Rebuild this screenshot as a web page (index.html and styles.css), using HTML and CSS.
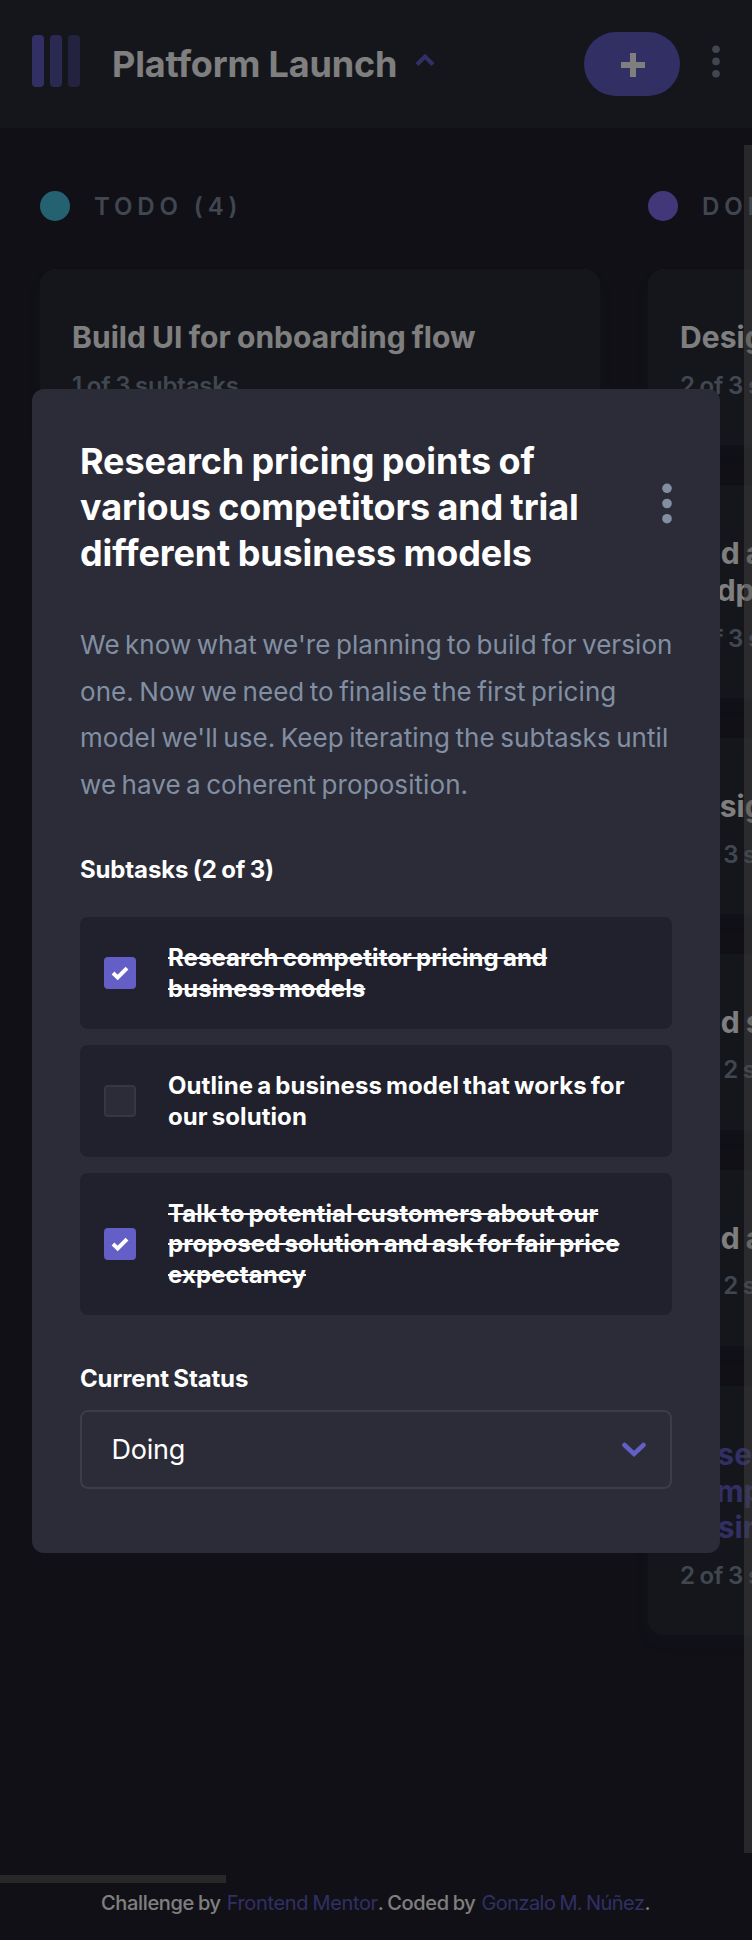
FILE: index.html
```html
<!DOCTYPE html>
<html lang="en">
<head>
<meta charset="utf-8">
<title>Kanban</title>
<link rel="stylesheet" href="styles.css">
</head>
<body>
<div class="app">
  <header class="header">
    <svg class="logo" width="48" height="52" viewBox="0 0 48 52"><rect width="12" height="52" rx="4" fill="#635fc7"/><rect x="18" width="12" height="52" rx="4" fill="#635fc7" opacity=".75"/><rect x="36" width="12" height="52" rx="4" fill="#635fc7" opacity=".5"/></svg>
    <h1 class="board-name">Platform Launch</h1>
    <svg class="board-arrow" width="20" height="14" viewBox="0 0 20 14"><path d="M2 11.5 10 3.5 18 11.5" fill="none" stroke="#635fc7" stroke-width="4"/></svg>
    <button class="add" aria-label="Add task"><svg width="26" height="26" viewBox="0 0 26 26"><path d="M10 1h6v9h9v6h-9v9h-6v-9H1v-6h9z" fill="#fff"/></svg></button>
    <svg class="menu" width="8" height="33" viewBox="0 0 8 33"><g fill="#828fa3"><circle cx="4" cy="4.2" r="3.8"/><circle cx="4" cy="16.4" r="3.8"/><circle cx="4" cy="28.7" r="3.8"/></g></svg>
  </header>
  <main class="board">
    <section class="column">
      <h2 class="column-name"><span class="dot dot-todo"></span>TODO (4)</h2>
      <article class="card"><h3>Build UI for onboarding flow</h3><p>1 of 3 subtasks</p></article>
    </section>
    <section class="column">
      <h2 class="column-name"><span class="dot dot-doing"></span>DOING (6)</h2>
      <article class="card"><h3>Design settings and search pages</h3><p>2 of 3 subtasks</p></article>
      <article class="card"><h3>Add account management<br>endpoints</h3><p>2 of 3 subtasks</p></article>
      <article class="card"><h3>Design onboarding flow</h3><p>1 of 3 subtasks</p></article>
      <article class="card"><h3>Add search endpoints</h3><p>1 of 2 subtasks</p></article>
      <article class="card"><h3>Add authentication endpoints</h3><p>1 of 2 subtasks</p></article>
      <article class="card active"><h3>Research pricing points of various<br>competitors and trial different<br>business models</h3><p>2 of 3 subtasks</p></article>
    </section>
    <span class="scroll-y"></span>
    <span class="scroll-x"></span>
  </main>
  <footer class="footer">Challenge by <a class="link-mentor">Frontend Mentor</a>. Coded by <a class="link-author">Gonzalo M. Núñez</a>.</footer>
</div>
<div class="overlay">
  <div class="modal" role="dialog">
    <div class="modal-head">
      <h2>Research pricing points of<br>various competitors and trial<br>different business models</h2>
      <svg width="10" height="41" viewBox="0 0 10 41"><g fill="#828fa3"><circle cx="5" cy="5.3" r="4.8"/><circle cx="5" cy="20.5" r="4.8"/><circle cx="5" cy="35.7" r="4.8"/></g></svg>
    </div>
    <p class="description">We know what we're planning to build for version<br>one. Now we need to finalise the first pricing<br>model we'll use. Keep iterating the subtasks until<br>we have a coherent proposition.</p>
    <h3 class="label">Subtasks (2 of 3)</h3>
    <ul class="subtasks">
      <li class="done"><span class="check"><svg width="20" height="16" viewBox="0 0 20 16"><path d="M3 8 7.7 12.4 17 3.2" fill="none" stroke="#fff" stroke-width="4"/></svg></span><span class="task">Research competitor pricing and<br>business models</span></li>
      <li><span class="check"></span><span class="task">Outline a business model that works for<br>our solution</span></li>
      <li class="done"><span class="check"><svg width="20" height="16" viewBox="0 0 20 16"><path d="M3 8 7.7 12.4 17 3.2" fill="none" stroke="#fff" stroke-width="4"/></svg></span><span class="task">Talk to potential customers about our<br>proposed solution and ask for fair price<br>expectancy</span></li>
    </ul>
    <h3 class="label status">Current Status</h3>
    <div class="select"><span>Doing</span><svg width="24" height="16" viewBox="0 0 24 16"><path d="M2.5 3 12 12 21.5 3" fill="none" stroke="#635fc7" stroke-width="4.5" stroke-linecap="round"/></svg></div>
  </div>
</div>
</body>
</html>
```
FILE: styles.css
```css
* { box-sizing: border-box; margin: 0; padding: 0; }
body { width: 752px; height: 1940px; overflow: hidden; background: #20212c; color: #fff; font-family: Inter, "Liberation Sans", sans-serif; }
h1, h2, h3, p, li, .footer, .select { white-space: nowrap; }
.app { display: flex; flex-direction: column; height: 1940px; background: #20212c; }
.header { display: flex; align-items: center; height: 128px; padding: 0 32.5px 0 32px; background: #2b2c37; }
.logo { margin: 0 32px 6px 0; }
.board-name { width: 285px; margin: 0 18px 0 0; font-size: 36px; line-height: 46px; letter-spacing: -.15px; }
.board-arrow { margin-bottom: 8px; }
.add { display: grid; place-items: center; width: 96px; height: 64px; margin-left: auto; padding: 2px 0 0 2px; border: 0; border-radius: 32px; background: #635fc7; }
.menu { margin: 0 0 6px 31.5px; }
.board { position: relative; display: flex; gap: 48px; height: 1755px; padding: 63px 40px 0; overflow: hidden; }
.column { display: flex; flex-direction: column; gap: 40px; flex: 0 0 560px; }
.column-name { display: flex; align-items: center; gap: 24px; height: 30px; margin-bottom: 8px; color: #828fa3; font-size: 24px; font-weight: 600; letter-spacing: 4.9px; }
.dot { width: 30px; height: 30px; border-radius: 50%; }
.dot-todo { background: #49c4e5; }
.dot-doing { background: #8471f2; }
.card { padding: 50.2px 32px 44.2px; border-radius: 16px; background: #2b2c37; box-shadow: 0 8px 12px rgba(54, 78, 126, .1); }
.card h3 { margin-bottom: 14.8px; font-size: 30px; line-height: 36.8px; letter-spacing: .05px; word-spacing: -1px; }
.card p { color: #828fa3; font-size: 24px; font-weight: 600; line-height: 30px; letter-spacing: -.2px; word-spacing: -1px; }
.card.active h3 { color: #635fc7; }
.scroll-y, .scroll-x { position: absolute; background: rgba(144, 144, 138, .43); }
.scroll-y { top: 17px; right: 0; width: 8px; height: 1708px; }
.scroll-x { bottom: 0; left: 0; width: 226px; height: 8px; }
.footer { padding: 7px 0 0 101px; font-size: 20px; font-weight: 500; line-height: 26px; letter-spacing: -.35px; word-spacing: -1px; }
.footer a { margin-left: 2px; color: #635fc7; font-weight: 400; }
.footer .link-author { letter-spacing: -.57px; }
.overlay { position: absolute; inset: 0; height: 1940px; padding: 389px 32px 0; background: rgba(0, 0, 0, .5); }
.modal { height: 1164px; padding: 49px 48px 0; border-radius: 12px; background: #2b2c37; }
.modal-head { display: flex; justify-content: space-between; align-items: center; margin-bottom: 46px; }
.modal-head svg { margin-bottom: 8px; }
.modal h2 { font-size: 36px; line-height: 46px; letter-spacing: -.1px; word-spacing: -1px; }
.description { margin-bottom: 46.5px; color: #828fa3; font-size: 26px; line-height: 46.5px; letter-spacing: .08px; word-spacing: -2px; }
.label { font-size: 24px; line-height: 30px; letter-spacing: -.15px; word-spacing: -1px; }
.subtasks { display: grid; gap: 16px; margin-top: 32.5px; list-style: none; }
.subtasks li { display: flex; align-items: center; gap: 32px; padding: 25.2px 24px; border-radius: 8px; background: #20212c; font-size: 24px; font-weight: 700; line-height: 30.7px; letter-spacing: .08px; word-spacing: -1.7px; }
.task { margin: 1px 0 -1px; }
.done { text-decoration: line-through; text-decoration-thickness: 2px; }
.check { display: grid; place-items: center; width: 32px; height: 32px; border: 2px solid #353742; border-radius: 4px; background: #2b2c37; }
.done .check { border-color: #635fc7; background: #635fc7; }
.status { margin: 49px 0 16px; }
.select { display: flex; align-items: center; justify-content: space-between; height: 79px; padding: 0 24px 0 29.5px; border: 2px solid #3b3d49; border-radius: 8px; font-size: 27px; letter-spacing: -.2px; }
```
